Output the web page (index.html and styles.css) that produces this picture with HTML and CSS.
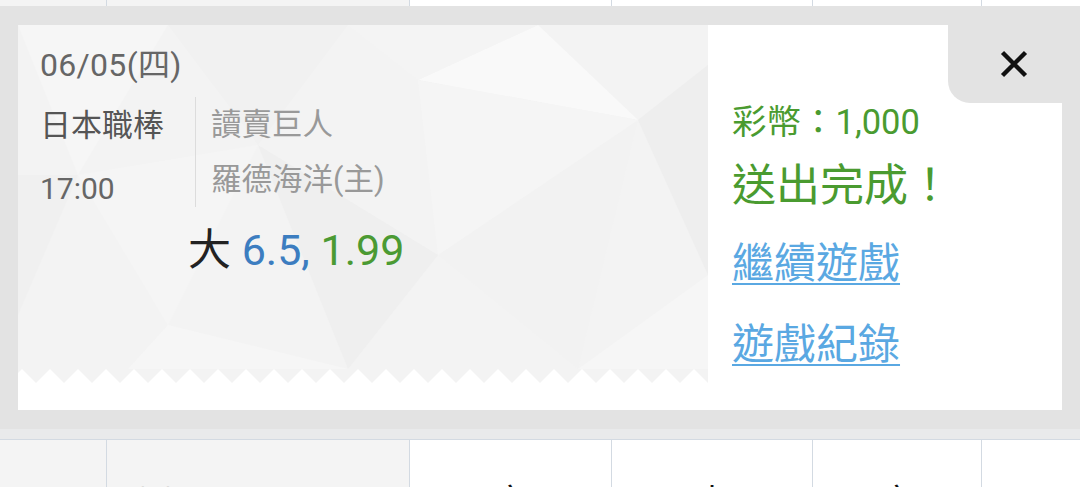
FILE: index.html
```html
<!DOCTYPE html>
<html lang="zh-Hant">

<head>
    <meta charset="UTF-8">
    <meta name="viewport" content="width=device-width, initial-scale=1.0">
    <title>注單送出</title>
    <link rel="stylesheet" href="styles.css">
</head>

<body>
    <div class="row row-top">
        <div class="cell c1 shade"></div>
        <div class="cell c2 shade"></div>
        <div class="cell c3"></div>
        <div class="cell c4"></div>
        <div class="cell c5"></div>
        <div class="cell c6"></div>
    </div>

    <div class="panel">
        <div class="card">
            <div class="ticket">
                <div class="ticket-face">
                    <!-- low poly background -->
                    <svg class="ticket-bg" width="690" height="344" viewBox="0 0 690 344">
                        <polygon points="0,0 150,0 60,150" fill="#f6f6f6" />
                        <polygon points="150,0 330,0 240,120" fill="#f1f1f1" />
                        <polygon points="400,55 520,0 620,95" fill="#f9f9f9" />
                        <polygon points="330,0 520,0 400,55" fill="#f4f4f4" />
                        <polygon points="620,95 690,40 690,250" fill="#eeeeee" />
                        <polygon points="0,150 60,150 0,290" fill="#f0f0f0" />
                        <polygon points="60,150 240,120 150,300" fill="#f5f5f5" />
                        <polygon points="240,120 420,230 330,344" fill="#efefef" />
                        <polygon points="420,230 620,95 560,344" fill="#f2f2f2" />
                        <polygon points="150,300 330,344 110,344" fill="#f6f6f6" />
                        <polygon points="560,344 690,250 690,344" fill="#f6f6f6" />
                        <polygon points="400,55 620,95 420,230" fill="#f5f5f5" />
                    </svg>

                    <div class="ticket-body">
                        <div class="date">06/05(四)</div>
                        <div class="match">
                            <div class="league">
                                <div>日本職棒</div>
                                <div>17:00</div>
                            </div>
                            <div class="teams">
                                <div>讀賣巨人</div>
                                <div>羅德海洋(主)</div>
                            </div>
                        </div>
                        <div class="pick">大 <span class="pick-line">6.5,</span> <span class="pick-odds">1.99</span></div>
                    </div>
                </div>
                <svg class="zigzag" width="690" height="14" viewBox="0 0 690 14">
                    <defs>
                        <pattern id="teeth" width="28" height="14" patternUnits="userSpaceOnUse" x="4">
                            <path d="M0 0H28L14 14Z" fill="#f3f3f3" />
                        </pattern>
                    </defs>
                    <rect width="690" height="14" fill="url(#teeth)" />
                </svg>
            </div>

            <div class="result">
                <button class="close-btn" aria-label="關閉">
                    <svg width="28" height="28" viewBox="0 0 28 28">
                        <path d="M2.5 2.5L25.5 25.5M25.5 2.5L2.5 25.5" stroke="#111" stroke-width="4.4" />
                    </svg>
                </button>
                <div class="coins">彩幣：1,000</div>
                <div class="done">送出完成！</div>
                <a class="link" href="#">繼續遊戲</a>
                <a class="link" href="#">遊戲紀錄</a>
            </div>
        </div>
    </div>

    <div class="strip"></div>

    <div class="row row-bottom">
        <div class="cell c1 shade"></div>
        <div class="cell c2 shade"><span class="peek grey">讀賣巨人</span></div>
        <div class="cell c3"><span class="peek">客</span></div>
        <div class="cell c4"><span class="peek">大</span></div>
        <div class="cell c5"><span class="peek">客</span></div>
        <div class="cell c6"></div>
    </div>
</body>

</html>
```

FILE: styles.css
```css
body {
    margin: 0;
    width: 1080px;
    height: 487px;
    overflow: hidden;
    background-color: #fff;
    font-family: Roboto, "Noto Sans CJK TC", sans-serif;
}

.row {
    display: flex;
}

.row-top {
    height: 6px;
}

.row-bottom {
    height: 47px;
}

.cell {
    box-sizing: border-box;
    border-right: 1px solid #d3dae2;
    overflow: hidden;
}

.shade {
    background-color: #f4f4f4;
}

.c1 { width: 107px; }
.c2 { width: 303px; }
.c3 { width: 202px; }
.c4 { width: 201px; }
.c5 { width: 169px; }
.c6 { flex: 1; border-right: none; }

.peek {
    display: block;
    padding-top: 42px;
    font-size: 34px;
    line-height: 40px;
    text-align: center;
    color: #111;
}

.peek.grey {
    text-align: left;
    padding-left: 16px;
    font-size: 30px;
    color: #999;
}

.panel {
    background-color: #e3e3e3;
    padding: 19px 18px;
}

.strip {
    height: 10px;
    background-color: #e9eaeb;
    border-bottom: 1px solid #d3dae2;
}

.card {
    display: flex;
    height: 385px;
    background-color: #fff;
}

.ticket {
    width: 690px;
    display: flex;
    flex-direction: column;
}

.ticket-face {
    position: relative;
    height: 344px;
    background-color: #f3f3f3;
}

.ticket-bg {
    position: absolute;
    left: 0;
    top: 0;
}

.zigzag {
    display: block;
}

.ticket-body {
    position: relative;
    padding: 20px 0 0 22px;
}

.date {
    font-size: 32px;
    line-height: 40px;
    letter-spacing: 0.3px;
    color: #666;
}

.match {
    display: flex;
    align-items: flex-start;
    margin-top: 12px;
}

.league {
    width: 155px;
    margin-top: -3px;
    font-size: 31px;
    line-height: 63px;
    color: #555;
}

.league div:last-child {
    font-size: 30px;
    color: #666;
}

.teams {
    border-left: 1px solid #dcdcdc;
    padding-left: 15px;
    font-size: 30.5px;
    line-height: 55px;
    color: #999;
}

.pick {
    margin: 5px 0 0 148px;
    font-size: 43px;
    line-height: 50px;
    color: #222;
}

.pick-line {
    color: #3c7dc0;
}

.pick-odds {
    color: #4b9a33;
}

.result {
    flex: 1;
    display: flex;
    flex-direction: column;
    align-items: flex-start;
    padding-left: 24px;
}

.close-btn {
    align-self: flex-end;
    width: 114px;
    height: 78px;
    border: none;
    padding: 0 0 0 18px;
    background-color: #e3e3e3;
    border-bottom-left-radius: 22px;
    display: flex;
    align-items: center;
    justify-content: center;
    cursor: pointer;
}

.coins {
    margin-top: -3px;
    font-size: 34.5px;
    line-height: 44px;
    color: #4a9b30;
}

.done {
    margin-top: 12px;
    font-size: 44px;
    line-height: 60px;
    color: #4a9b30;
}

.link {
    margin-top: 14px;
    font-size: 42px;
    line-height: 68px;
    color: #5aa8e2;
    text-decoration: underline;
    text-underline-offset: 5px;
    text-decoration-thickness: 2px;
}

.link:last-child {
    margin-top: 13px;
}
```
